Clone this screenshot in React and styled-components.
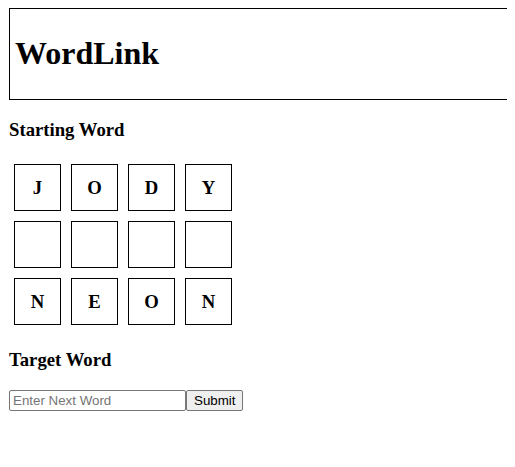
import React, { useState } from "react";
import styled, { createGlobalStyle } from "styled-components";

const GlobalStyle = createGlobalStyle`
  html {
    overflow-x: hidden;
  }
  body {
    margin: 8px 8px 8px 9px;
    font-family: "Liberation Serif", "Times New Roman", serif;
    color: #000;
    background: #fff;
  }
`;

// the title bar runs past the right edge of the window
const Header = styled.header`
  width: 100vw;
  padding: 5px;
  border: 1px solid #000;
  h1 {
    font-size: 32px;
    margin: 21.44px 0;
  }
`;

const Heading = styled.h3`
  font-size: 18.72px;
  margin: 18.72px 0;
`;

const Board = styled.div`
  display: flex;
  flex-direction: column;
`;

const Row = styled.div`
  display: flex;
`;

const Tile = styled.div`
  width: 45px;
  height: 45px;
  margin: 5px;
  border: 1px solid #000;
  display: flex;
  align-items: center;
  justify-content: center;
  font-size: 18.72px;
  font-weight: bold;
`;

const Form = styled.form`
  display: flex;
  align-items: stretch;
`;

const Input = styled.input`
  width: 177px;
  height: 21px;
  box-sizing: border-box;
  padding: 1px 3px;
  border: 1px solid #767676;
  border-radius: 2px;
  font-family: "Liberation Sans", Arial, sans-serif;
  font-size: 13.33px;
  &::placeholder {
    color: #757575;
  }
`;

const Button = styled.button`
  height: 21px;
  box-sizing: border-box;
  padding: 1px 7px;
  border: 1px solid #767676;
  border-radius: 2px;
  background: #efefef;
  color: #000;
  font-family: "Liberation Sans", Arial, sans-serif;
  font-size: 13.33px;
`;

const rows = [
  ["J", "O", "D", "Y"],
  ["", "", "", ""],
  ["N", "E", "O", "N"],
];

export default function App() {
  const [word, setWord] = useState("");

  return (
    <>
      <GlobalStyle />
      <Header>
        <h1>WordLink</h1>
      </Header>
      <Heading>Starting Word</Heading>
      <Board>
        {rows.map((row, i) => (
          <Row key={i}>
            {row.map((letter, j) => (
              <Tile key={j}>{letter}</Tile>
            ))}
          </Row>
        ))}
      </Board>
      <Heading>Target Word</Heading>
      <Form onSubmit={(e) => e.preventDefault()}>
        <Input
          placeholder="Enter Next Word"
          value={word}
          onChange={(e) => setWord(e.target.value)}
        />
        <Button type="submit">Submit</Button>
      </Form>
    </>
  );
}
